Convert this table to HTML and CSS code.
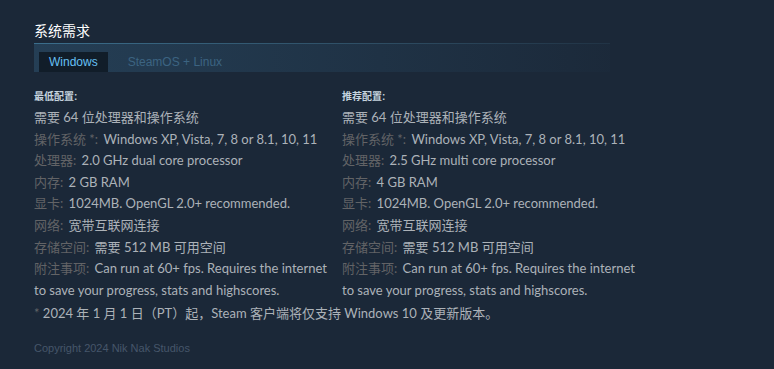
FILE: index.html
```html
<!DOCTYPE html>
<html lang="zh">
<head>
<meta charset="utf-8">
<link rel="stylesheet" href="styles.css">
</head>
<body>
<div class="page">
  <h2 class="title">系统需求</h2>
  <div class="tabs">
    <div class="tab active">Windows</div>
    <div class="tab">SteamOS + Linux</div>
  </div>
  <div class="cols">
    <div class="col">
      <div class="colhead">最低配置:</div>
      <ul class="reqs">
        <li>需要 64 位处理器和操作系统</li>
        <li><span class="lbl">操作系统 *:</span> Windows XP, Vista, 7, 8 or 8.1, 10, 11</li>
        <li><span class="lbl">处理器:</span> 2.0 GHz dual core processor</li>
        <li><span class="lbl">内存:</span> 2 GB RAM</li>
        <li><span class="lbl">显卡:</span> 1024MB. OpenGL 2.0+ recommended.</li>
        <li><span class="lbl">网络:</span> 宽带互联网连接</li>
        <li><span class="lbl">存储空间:</span> 需要 512 MB 可用空间</li>
        <li><span class="lbl">附注事项:</span> Can run at 60+ fps. Requires the internet to save your progress, stats and highscores.</li>
      </ul>
    </div>
    <div class="col">
      <div class="colhead">推荐配置:</div>
      <ul class="reqs">
        <li>需要 64 位处理器和操作系统</li>
        <li><span class="lbl">操作系统 *:</span> Windows XP, Vista, 7, 8 or 8.1, 10, 11</li>
        <li><span class="lbl">处理器:</span> 2.5 GHz multi core processor</li>
        <li><span class="lbl">内存:</span> 4 GB RAM</li>
        <li><span class="lbl">显卡:</span> 1024MB. OpenGL 2.0+ recommended.</li>
        <li><span class="lbl">网络:</span> 宽带互联网连接</li>
        <li><span class="lbl">存储空间:</span> 需要 512 MB 可用空间</li>
        <li><span class="lbl">附注事项:</span> Can run at 60+ fps. Requires the internet to save your progress, stats and highscores.</li>
      </ul>
    </div>
  </div>
  <p class="note"><span class="star">*</span> 2024 年 1 月 1 日（PT）起，Steam 客户端将仅支持 Windows 10 及更新版本。</p>
  <p class="copy">Copyright 2024 Nik Nak Studios</p>
</div>
</body>
</html>
```
FILE: styles.css
```css
html, body {
  margin: 0;
  background: #1b2838;
}
body {
  font-family: "Liberation Sans", Arial, "Noto Sans CJK SC", sans-serif;
  color: #acb2b8;
}
.page {
  padding: 21px 0 0 34px;
  width: 576px;
}
.title {
  margin: 0;
  font-size: 14px;
  font-weight: normal;
  color: #ffffff;
  line-height: 20px;
  padding-bottom: 2px;
  border-bottom: 1px solid transparent;
  border-image: linear-gradient(to right, #3b6e8c 0%, #2e4d63 60%, rgba(46,77,99,0.3) 100%) 1;
}
.tabs {
  display: flex;
  gap: 0;
  padding: 8px 0 0 5px;
  height: 20px;
  background: linear-gradient(to right, rgba(40,70,95,0.75) 0%, rgba(35,60,82,0.5) 60%, rgba(30,50,70,0.15) 100%);
}
.tab {
  font-size: 12px;
  line-height: 20px;
  padding: 0 10px;
  color: #3c6482;
}
.tab.active {
  background: #111d29;
  color: #66c0f4;
}
.tab.active + .tab {
  margin-left: 10px;
}
.cols {
  display: flex;
  margin-top: 18px;
}
.col {
  width: 308px;
  flex: none;
}
.colhead {
  font-size: 10px;
  font-weight: bold;
  color: #c6d4df;
  line-height: 14px;
  height: 14px;
  margin-bottom: 3px;
}
.reqs {
  list-style: none;
  margin: 0;
  padding: 0;
  font-family: Lato, "Noto Sans CJK SC", sans-serif;
  font-size: 13px;
  line-height: 21.6px;
  width: 296px;
}
.lbl {
  color: #626366;
  margin-right: 2px;
}
.note {
  margin: 1px 0 0;
  font-family: Lato, "Noto Sans CJK SC", sans-serif;
  font-size: 13px;
  line-height: 22px;
  color: #acb2b8;
}
.star {
  color: #626366;
}
.copy {
  margin: 16px 0 0;
  font-size: 11px;
  line-height: 16px;
  color: #46566a;
}
```
